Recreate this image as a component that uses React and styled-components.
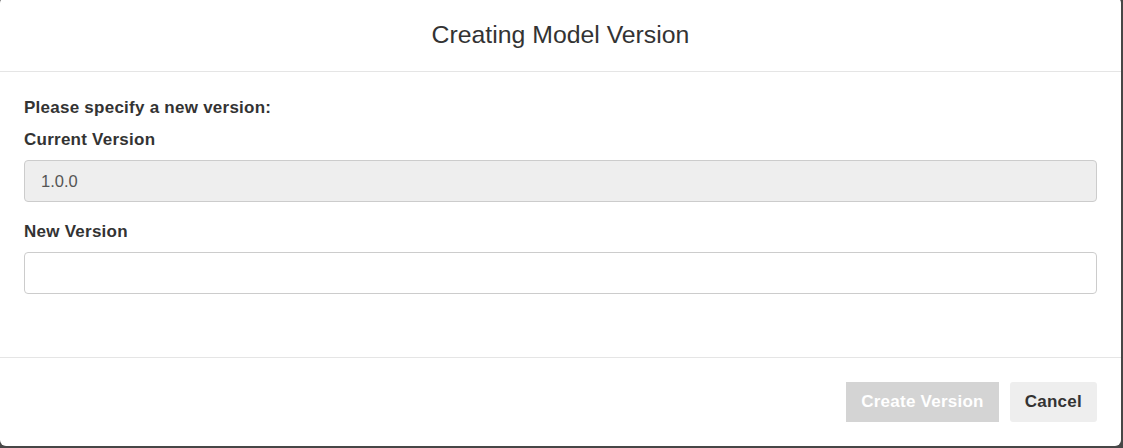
import React from 'react'
import styled, { createGlobalStyle } from 'styled-components'

const GlobalStyle = createGlobalStyle`
  html, body {
    margin: 0;
    padding: 0;
    background: #474747;
    font-family: "Liberation Sans", Arial, Helvetica, sans-serif;
    color: #333;
  }
`

const Modal = styled.div`
  box-sizing: border-box;
  width: 1121px;
  height: 449px;
  margin-top: -3px;
  background: #fff;
  border-radius: 6px;
  display: flex;
  flex-direction: column;
  overflow: hidden;
`

const Header = styled.div`
  height: 75px;
  padding-top: 2px;
  box-sizing: border-box;
  border-bottom: 1px solid #e5e5e5;
  display: flex;
  align-items: center;
  justify-content: center;
`

const Title = styled.h4`
  margin: 0;
  font-size: 24.8px;
  font-weight: normal;
  color: #333;
`

const Body = styled.div`
  padding: 24px 24px 63px;
  display: flex;
  flex-direction: column;
`

const Intro = styled.div`
  font-size: 17px;
  letter-spacing: 0.25px;
  font-weight: bold;
  line-height: 24px;
  margin-bottom: 8px;
`

const Label = styled.label`
  display: block;
  font-size: 17px;
  letter-spacing: 0.25px;
  font-weight: bold;
  line-height: 24px;
  margin-bottom: 8px;
`

const Input = styled.input`
  box-sizing: border-box;
  width: 100%;
  height: 42px;
  padding: 0 16px;
  font-family: inherit;
  font-size: 16.5px;
  color: #555;
  background: ${p => (p.readOnly ? '#eeeeee' : '#fff')};
  border: 1px solid #ccc;
  border-radius: 4px;
  margin-bottom: ${p => p.$gap || 0}px;
  outline: none;
`

const Footer = styled.div`
  border-top: 1px solid #e5e5e5;
  padding: 24px 24px 0;
  display: flex;
  justify-content: flex-end;
  gap: 11px;
`

const Button = styled.button`
  height: 40px;
  padding: 0 15px;
  font-family: inherit;
  font-size: 17px;
  letter-spacing: 0.25px;
  font-weight: bold;
  border: none;
  border-radius: ${p => (p.$primary ? 0 : 3)}px;
  background: ${p => (p.$primary ? '#d4d4d4' : '#eeeeee')};
  color: ${p => (p.$primary ? '#fff' : '#333')};
  cursor: ${p => (p.disabled ? 'default' : 'pointer')};
`

export default function App() {
  return (
    <>
      <GlobalStyle />
      <Modal>
        <Header>
          <Title>Creating Model Version</Title>
        </Header>
        <Body>
          <Intro>Please specify a new version:</Intro>
          <Label>Current Version</Label>
          <Input readOnly value="1.0.0" $gap={18} />
          <Label>New Version</Label>
          <Input defaultValue="" />
        </Body>
        <Footer>
          <Button $primary disabled>Create Version</Button>
          <Button>Cancel</Button>
        </Footer>
      </Modal>
    </>
  )
}
